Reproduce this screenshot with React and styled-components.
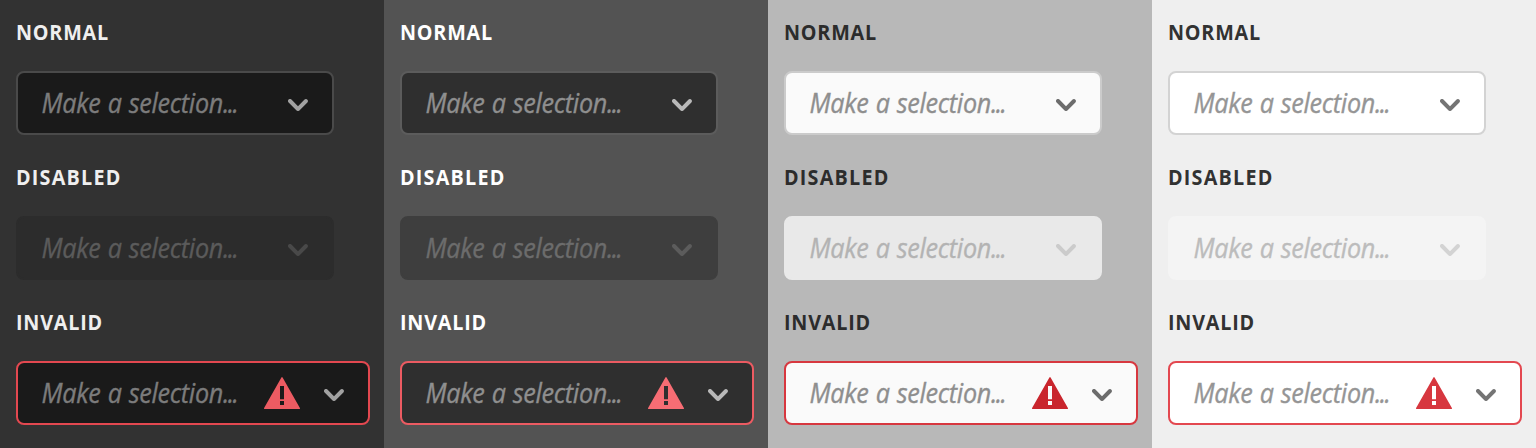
import React from 'react';
import styled, { createGlobalStyle, ThemeProvider } from 'styled-components';

const GlobalStyle = createGlobalStyle`
  *, *::before, *::after { box-sizing: border-box; }
  body { margin: 0; }
`;

const themes = [
  {
    name: 'darkest', page: '#323232', label: '#efefef', field: '#1a1a1a', border: '#4a4a4a',
    text: '#7c7c7c', chevron: '#a2a2a2',
    disabledField: '#2c2c2c', disabledText: '#5b5b5b', disabledChevron: '#494949',
    invalid: '#e34850', alert: '#ec5b62',
  },
  {
    name: 'dark', page: '#535353', label: '#ffffff', field: '#2f2f2f', border: '#5c5c5c',
    text: '#8f8f8f', chevron: '#b9b9b9',
    disabledField: '#3e3e3e', disabledText: '#6c6c6c', disabledChevron: '#5c5c5c',
    invalid: '#ec5b62', alert: '#f76d74',
  },
  {
    name: 'light', page: '#b8b8b8', label: '#2c2c2c', field: '#fafafa', border: '#cbcbcb',
    text: '#8e8e8e', chevron: '#6c6c6c',
    disabledField: '#e9e9e9', disabledText: '#b3b3b3', disabledChevron: '#cbcbcb',
    invalid: '#d7373f', alert: '#c9252d',
  },
  {
    name: 'lightest', page: '#efefef', label: '#323232', field: '#ffffff', border: '#d3d3d3',
    text: '#959595', chevron: '#747474',
    disabledField: '#f4f4f4', disabledText: '#bcbcbc', disabledChevron: '#d3d3d3',
    invalid: '#e34850', alert: '#d7373f',
  },
];

const Board = styled.main`
  display: grid;
  grid-template-columns: repeat(4, 384px);
  height: 448px;
  overflow: hidden;
`;

const Panel = styled.section`
  display: flex;
  flex-direction: column;
  gap: 22px;
  padding: 12px 14px 0 16px;
  background: ${({ theme }) => theme.page};
`;

const Group = styled.div`
  display: flex;
  flex-direction: column;
  align-items: flex-start;
  gap: 19px;
`;

const Label = styled.span`
  height: 40px;
  line-height: 40px;
  white-space: nowrap;
  font-family: "Open Sans", "Noto Sans", sans-serif;
  font-size: 21px;
  font-weight: 700;
  letter-spacing: ${({ $state }) => ($state === 'disabled' ? 1.3 : 0.85)}px;
  transform: scaleX(0.94);
  transform-origin: left center;
  color: ${({ theme }) => theme.label};
`;

const Field = styled.button`
  display: flex;
  align-items: center;
  width: ${({ $state }) => ($state === 'invalid' ? 354 : 318)}px;
  height: 64px;
  padding: 0 24px;
  border: 2px solid
    ${({ theme, $state }) =>
      $state === 'invalid' ? theme.invalid : $state === 'disabled' ? theme.disabledField : theme.border};
  border-radius: 8px;
  background: ${({ theme, $state }) => ($state === 'disabled' ? theme.disabledField : theme.field)};
  color: ${({ theme, $state }) => ($state === 'disabled' ? theme.disabledChevron : theme.chevron)};
`;

const Placeholder = styled.span`
  width: 222px;
  flex: none;
  text-align: left;
  white-space: nowrap;
  font-family: "Open Sans", "Noto Sans", sans-serif;
  font-size: 27px;
  font-style: italic;
  font-weight: 500;
  letter-spacing: -0.35px;
  word-spacing: 1px;
  line-height: 36px;
  -webkit-text-stroke: 0.35px currentColor;
  transform: scaleX(0.934);
  transform-origin: left center;
  text-indent: -0.5px;
  color: ${({ theme, $state }) => ($state === 'disabled' ? theme.disabledText : theme.text)};
`;

const Dots = styled.span`
  letter-spacing: -1.7px;
`;

const ChevronIcon = styled.svg`
  flex: none;
  width: 20px;
  height: 12px;
  margin: 4px 0 0 auto;
  fill: currentColor;
`;

const AlertIcon = styled.svg`
  flex: none;
  width: 36px;
  height: 36px;
  fill: ${({ theme }) => theme.alert};
`;

function Picker({ state }) {
  return (
    <Field type="button" disabled={state === 'disabled'} $state={state}>
      <Placeholder $state={state}>Make a selection<Dots>...</Dots></Placeholder>
      {state === 'invalid' && (
        <AlertIcon viewBox="0 0 18 18" aria-hidden="true">
          <path d="M8.7 1.2L.05 16.5A.33.33 0 0 0 .34 17h17.32a.33.33 0 0 0 .29-.5L9.3 1.2a.35.35 0 0 0-.6 0zM10 15H8v-2h2zm0-2.9H8V5.5h2z" />
        </AlertIcon>
      )}
      <ChevronIcon viewBox="0 0 10 6" aria-hidden="true">
        <path d="M9.99 1.01A1 1 0 0 0 8.283.303L5 3.586 1.717.303A1 1 0 1 0 .303 1.717l3.99 3.98a1 1 0 0 0 1.414 0l3.99-3.98a.997.997 0 0 0 .293-.707z" />
      </ChevronIcon>
    </Field>
  );
}

export default function App() {
  return (
    <>
      <GlobalStyle />
      <Board>
        {themes.map((theme) => (
          <ThemeProvider theme={theme} key={theme.name}>
            <Panel>
              {['normal', 'disabled', 'invalid'].map((state) => (
                <Group key={state}>
                  <Label $state={state}>{state.toUpperCase()}</Label>
                  <Picker state={state} />
                </Group>
              ))}
            </Panel>
          </ThemeProvider>
        ))}
      </Board>
    </>
  );
}
